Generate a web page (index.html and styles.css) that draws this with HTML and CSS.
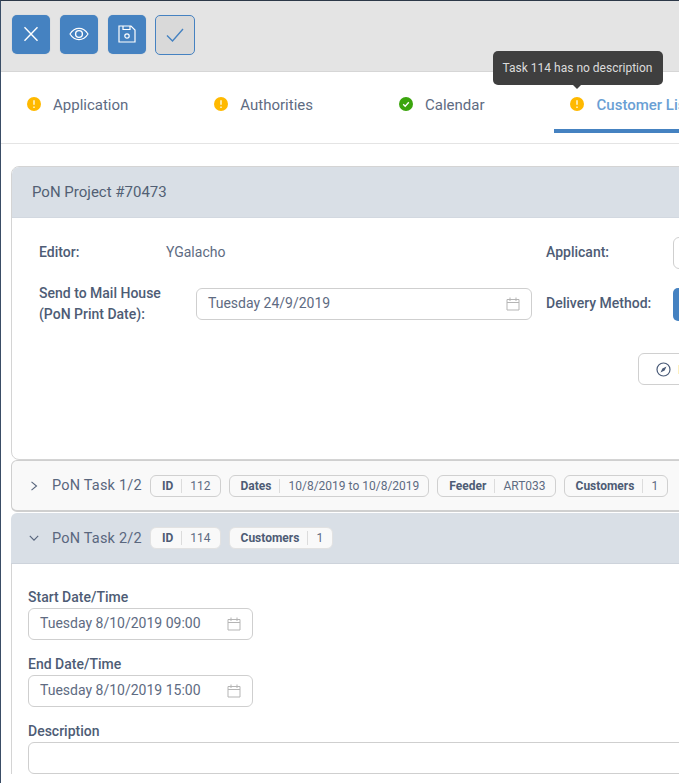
FILE: index.html
```html
<!DOCTYPE html>
<html lang="en">
<head>
<meta charset="utf-8">
<title>PoN Project</title>
<link rel="stylesheet" href="styles.css">
</head>
<body>
<svg class="defs" width="0" height="0" aria-hidden="true">
  <symbol id="cal" viewBox="0 0 14 14">
    <path d="M1 2.500h12v10.500h-12zM1 5.500h12M4 .5v3.500M10 .5v3.500" fill="none" stroke="#b5b5b5" stroke-width="1"/>
  </symbol>
  <symbol id="warn" viewBox="0 0 14 14">
    <circle cx="7" cy="7" r="7" fill="#ffb900"/>
    <path d="M7 3.200v4.600M7 9.600v1.300" stroke="#fff3c8" stroke-width="1.600" fill="none"/>
  </symbol>
  <symbol id="ok" viewBox="0 0 14 14">
    <circle cx="7" cy="7" r="7" fill="#3ba50d"/>
    <path d="M4.200 7.200l2 2 3.600-4" stroke="#fff" stroke-width="1.300" fill="none"/>
  </symbol>
</svg>
<div class="page">
  <header class="toolbar">
    <button class="tool" type="button"><svg width="16" height="16" viewBox="0 0 16 16"><path d="M1.500 1.200l13 13.600M14.500 1.200l-13 13.600" stroke="#fff" stroke-width="1.400" fill="none"/></svg></button>
    <button class="tool" type="button"><svg width="20" height="16" viewBox="0 0 20 16"><path d="M1 8c2.400-3.800 5.400-5.700 9-5.700S16.600 4.200 19 8c-2.400 3.800-5.400 5.700-9 5.700S3.400 11.800 1 8z" stroke="#fff" stroke-width="1.200" fill="none"/><circle cx="10" cy="8" r="3.400" stroke="#fff" stroke-width="1.400" fill="none"/></svg></button>
    <button class="tool" type="button"><svg width="18" height="18" viewBox="0 0 18 18"><path d="M1 1h12l4 4v12H1zM5 1v3.500h7V1" stroke="#fff" stroke-width="1.200" fill="none"/><circle cx="9" cy="11" r="2.200" stroke="#fff" stroke-width="1.200" fill="none"/></svg></button>
    <button class="tool tool-outline" type="button"><svg width="18" height="14" viewBox="0 0 18 14"><path d="M1 7.500l5.500 5.500L17 1" stroke="#4582c1" stroke-width="1.400" fill="none"/></svg></button>
  </header>

  <nav class="tabs">
    <a class="tab"><svg class="tab-icon"><use href="#warn"/></svg>Application</a>
    <a class="tab"><svg class="tab-icon"><use href="#warn"/></svg>Authorities</a>
    <a class="tab"><svg class="tab-icon"><use href="#ok"/></svg>Calendar</a>
    <a class="tab tab-active"><svg class="tab-icon"><use href="#warn"/></svg>Customer List<span class="tooltip">Task 114 has no description</span></a>
  </nav>

  <main class="content">
    <section class="panel">
      <h2 class="panel-head">PoN Project #70473</h2>
      <div class="panel-body">
        <div class="form-grid">
          <div class="row row-first">
            <span class="label label-editor">Editor:</span>
            <span class="value">YGalacho</span>
          </div>
          <div class="row row-first">
            <span class="label label-side">Applicant:</span>
            <span class="input input-side"></span>
          </div>
          <div class="row row-second">
            <span class="label label-mail">Send to Mail House<br>(PoN Print Date):</span>
            <span class="input input-print"><span class="input-text">Tuesday 24/9/2019</span><svg class="cal"><use href="#cal"/></svg></span>
          </div>
          <div class="row row-second">
            <span class="label label-side">Delivery Method:</span>
            <span class="select-blue"></span>
          </div>
        </div>
        <div class="actions">
          <button class="outline-btn" type="button">
            <svg width="15" height="15" viewBox="0 0 15 15"><circle cx="7.500" cy="7.500" r="6.500" stroke="#4a5b78" stroke-width="1.200" fill="none"/><path d="M10.500 4.500L8.600 8.600 4.500 10.500 6.400 6.400z" fill="#4a5b78"/></svg>
            <span class="outline-mark"></span>
          </button>
        </div>
      </div>
    </section>

    <section class="task">
      <svg class="chev" width="10" height="10" viewBox="0 0 10 10"><path d="M2.500 .8L7.500 5 2.500 9.200" stroke="#56647c" stroke-width="1.100" fill="none"/></svg>
      <span class="task-title">PoN Task 1/2</span>
      <span class="chip"><b>ID</b><i>112</i></span>
      <span class="chip"><b>Dates</b><i>10/8/2019 to 10/8/2019</i></span>
      <span class="chip"><b>Feeder</b><i>ART033</i></span>
      <span class="chip"><b>Customers</b><i>1</i></span>
    </section>

    <section class="task task-open">
      <svg class="chev" width="10" height="10" viewBox="0 0 10 10"><path d="M.8 2.800L5 7.200 9.200 2.800" stroke="#56647c" stroke-width="1.100" fill="none"/></svg>
      <span class="task-title">PoN Task 2/2</span>
      <span class="chip"><b>ID</b><i>114</i></span>
      <span class="chip"><b>Customers</b><i>1</i></span>
    </section>

    <section class="task-body">
      <div class="field">
        <label class="label">Start Date/Time</label>
        <span class="input input-date"><span class="input-text">Tuesday 8/10/2019 09:00</span><svg class="cal"><use href="#cal"/></svg></span>
      </div>
      <div class="field">
        <label class="label">End Date/Time</label>
        <span class="input input-date"><span class="input-text">Tuesday 8/10/2019 15:00</span><svg class="cal"><use href="#cal"/></svg></span>
      </div>
      <div class="field">
        <label class="label">Description</label>
        <span class="input input-wide"></span>
      </div>
    </section>
  </main>
</div>
</body>
</html>
```
FILE: styles.css
```css
* { box-sizing: border-box; }
html, body { margin: 0; height: 783px; overflow: hidden; background: #fff; }
body {
  font-family: Roboto, "Liberation Sans", sans-serif;
  font-size: 14px;
  color: #56647c;
  border-top: 1px solid #2c3848;
  border-left: 1px solid #3a4d66;
}
.defs { position: absolute; }
.page { width: 1100px; }

.toolbar {
  height: 71px;
  background: #e4e4e4;
  border-bottom: 1px solid #d6d6d6;
  display: flex;
  align-items: flex-start;
  gap: 10px;
  padding: 14px 0 0 11px;
}
.tool {
  width: 38px;
  height: 39px;
  margin: 0;
  padding: 0 0 1px;
  border: 0;
  border-radius: 5px;
  background: #4582c1;
  box-shadow: 0 0 1px 0 #9fb4c9;
  display: flex;
  align-items: center;
  justify-content: center;
}
.tool-outline {
  width: 40px;
  height: 40px;
  margin-left: -1px;
  background: #d9d9d9;
  border: 1px solid #4582c1;
  box-shadow: none;
}

.tabs {
  height: 72px;
  border-bottom: 1px solid #e4e4e4;
  display: flex;
  padding-left: 10px;
}
.tab {
  position: relative;
  height: 61px;
  padding: 4px 70px 0 16px;
  display: flex;
  align-items: center;
  font-size: 15px;
  color: #5e6b82;
  margin-bottom: 10px;
}
.tab-icon { width: 14px; height: 14px; margin-right: 12px; margin-top: -2px; }
.tab-active {
  color: #6a9fd4;
  font-weight: 500;
  border-bottom: 4px solid #4582c1;
  padding-top: 8px;
  margin-left: -1px;
}
.tab-active .tab-icon { margin-right: 13px; }
.tooltip {
  position: absolute;
  left: -61px;
  top: -21px;
  width: 170px;
  height: 34px;
  background: #3f3f3f;
  color: #dcdcdc;
  font-size: 12px;
  font-weight: 400;
  border-radius: 5px;
  display: flex;
  align-items: center;
  justify-content: center;
}
.tooltip::after {
  content: "";
  position: absolute;
  left: 80px;
  bottom: -4px;
  border: 4px solid transparent;
  border-bottom: 0;
  border-top-color: #3f3f3f;
}

.content { padding: 22px 0 0 10px; }
.panel {
  border: 1px solid #d4d4d4;
  border-radius: 8px;
  overflow: hidden;
}
.panel-head {
  margin: 0;
  height: 51px;
  padding-left: 20px;
  background: #d9dfe6;
  border-bottom: 1px solid #d2d8e0;
  display: flex;
  align-items: center;
  font-size: 15px;
  font-weight: 400;
  color: #525f74;
}
.panel-body { padding: 19px 0 74px 27px; }
.form-grid {
  display: grid;
  grid-template-columns: 493px 1fr;
  column-gap: 14px;
  row-gap: 14px;
  align-items: center;
}
.row { display: flex; align-items: center; }
.row-first { height: 32px; }
.row-second { height: 42px; }
.label {
  font-weight: 500;
  color: #4e5c75;
  font-size: 14px;
  line-height: 21px;
}
.label-editor { width: 127px; padding-bottom: 2px; }
.label-side { width: 127px; flex: none; padding-bottom: 2px; }
.label-mail { width: 157px; flex: none; }
.value { color: #5e6b82; padding-bottom: 2px; }
.input {
  display: flex;
  align-items: center;
  justify-content: space-between;
  height: 32px;
  background: #fff;
  border: 1px solid #cfcfcf;
  border-radius: 6px;
  padding: 0 11px;
  color: #5e6b82;
  font-size: 14px;
}
.input-text { padding-bottom: 2px; }
.input-print { width: 336px; }
.input-side { width: 200px; }
.select-blue {
  width: 200px;
  height: 33px;
  background: #4582c1;
  border-radius: 5px;
}
.cal { width: 14px; height: 14px; flex: none; }

.actions { padding: 28px 0 0 599px; }
.outline-btn {
  width: 160px;
  height: 32px;
  margin: 0;
  padding: 0 0 0 17px;
  background: #fff;
  border: 1px solid #d0d0d0;
  border-radius: 6px;
  display: flex;
  align-items: center;
  gap: 7px;
}
.outline-mark { width: 8px; height: 9px; background: #fdf0c0; }

.task {
  height: 52px;
  background: #f9f9f9;
  border: 1px solid #cfcfcf;
  border-width: 1px 1px 2px;
  border-radius: 6px;
  display: flex;
  align-items: center;
  padding-left: 17px;
  gap: 8px;
}
.task-open {
  height: 51px;
  margin-top: 1px;
  background: #d9dfe6;
  border: 0;
  border-bottom: 1px solid #cdd3db;
  border-radius: 6px 6px 0 0;
  padding-left: 18px;
}
.chev { flex: none; margin-right: 5px; }
.task-title {
  font-size: 14.5px;
  letter-spacing: .2px;
  color: #5a677e;
  width: 90px;
}
.chip {
  display: flex;
  align-items: center;
  height: 22px;
  padding: 0 9px 0 11px;
  background: #f9f9f9;
  border: 1px solid #d0d0d0;
  border-radius: 6px;
  font-size: 12px;
}
.task-open .chip { background: #f9f9f9; border-color: #e2e2e2; }
.chip b { font-weight: 700; color: #4e5c75; padding-right: 8px; border-right: 1px solid #dcdcdc; }
.chip i { font-style: normal; color: #5e6b82; padding-left: 8px; }

.task-body {
  border-left: 1px solid #d4d4d4;
  padding: 23px 0 0 16px;
  display: flex;
  flex-direction: column;
  gap: 14px;
}
.field { display: flex; flex-direction: column; }
.field .label { height: 21px; }
.input-date { width: 225px; }
.input-wide { width: 900px; }
```
